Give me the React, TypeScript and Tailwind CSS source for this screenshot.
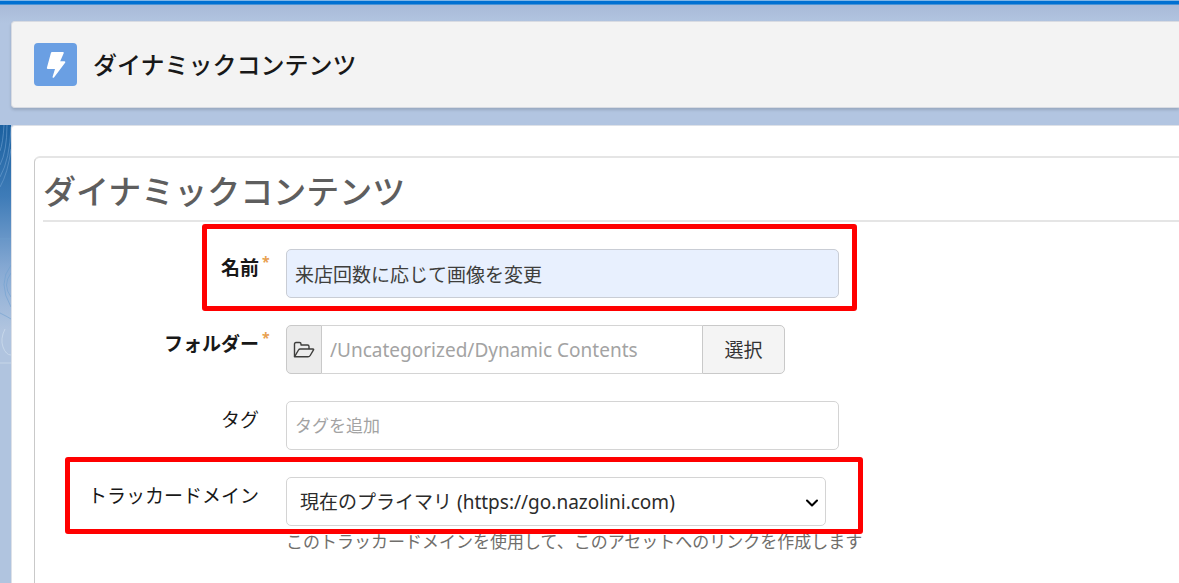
import { ChevronDown } from "lucide-react";
import type { JSX, ReactNode } from "react";

interface FieldRowProps {
  id: string;
  label: string;
  required?: boolean;
  children: ReactNode;
}

function BoltIcon(): JSX.Element {
  return (
    <svg viewBox="0 0 43 43" className="size-full" aria-hidden="true">
      <path
        d="M18 9h10.800c.8 0 1.200.6.900 1.300L26.200 18.200h4.200c.9 0 1.200.9.700 1.500L20 34.400c-.6.800-1.700.300-1.400-.700L21 26h-7.200c-.7 0-1.100-.6-.9-1.200l4-14.900c.2-.6.500-.9 1.100-.9z"
        fill="#fff"
      />
    </svg>
  );
}

function FolderIcon(): JSX.Element {
  return (
    <svg viewBox="0 0 22 18" className="h-[18px] w-[22px]" fill="none" stroke="#3e3e3c" strokeWidth="1.4" strokeLinejoin="round" aria-hidden="true">
      <path d="M1.500 15.500V3q0-1.500 1.500-1.500h3.500Q8 1.500 8 3v1h6.500Q16 4 16 5.500V8" />
      <path d="M1.500 15.800L5.500 9q.600-1 1.800-1H20q1 0 .5.900l-3.300 5.600q-.800 1.300-2.200 1.300H2q-.5 0-.5-.3z" />
    </svg>
  );
}

function FieldRow({ id, label, required = false, children }: FieldRowProps): JSX.Element {
  return (
    <div className="grid grid-cols-[227px_1fr] gap-4">
      <label htmlFor={id} className={required ? "flex justify-end pt-[5px] font-bold" : "flex justify-end pt-[5px]"}>
        {label}
        <span className="w-[11px] pl-[3px] text-sm leading-4 text-[#e8a04f]">{required ? "*" : ""}</span>
      </label>
      <div>{children}</div>
    </div>
  );
}

// 注目させたい行を囲む赤枠
function Highlight({ className }: { className: string }): JSX.Element {
  return <div aria-hidden="true" className={`pointer-events-none absolute rounded-[3px] border-5 border-[#ff0000] ${className}`} />;
}

export default function App(): JSX.Element {
  return (
    <div className="flex min-h-screen flex-col overflow-hidden bg-[#b0c4df] font-['Noto_Sans','Noto_Sans_CJK_JP',sans-serif] text-[19px] leading-7 text-[#181818]">
      <div className="h-[5px] border-t border-b border-t-[#7fb5e6] border-b-[#4a93d6] bg-[#0070d2]" />
      <div className="bg-linear-to-b from-[#a9bad8] to-[#b2c5e1] to-15% pt-4 pb-[17px] pl-[11px]">
        <header className="flex h-[87px] items-center gap-4 rounded-l border border-r-0 border-[#d8dbe2] bg-[#f3f3f3] pl-[22px] shadow-[0_2px_3px_rgba(0,0,0,0.15)]">
          <div className="size-[43px] rounded bg-[#6a9fe3]">
            <BoltIcon />
          </div>
          <h1 className="text-2xl font-medium">ダイナミックコンテンツ</h1>
        </header>
      </div>

      <div className="flex grow bg-[#b0c4df]">
        <div className="w-[11px] shrink-0">
          <svg viewBox="0 0 11 240" className="h-60 w-[11px]" aria-hidden="true">
            <defs>
              <linearGradient id="sky" x1="0" y1="0" x2="0" y2="1">
                <stop offset="0" stopColor="#1b609f" />
                <stop offset="0.3" stopColor="#3f7cb8" />
                <stop offset="0.6" stopColor="#86a9d3" />
                <stop offset="0.85" stopColor="#b0c4df" />
              </linearGradient>
            </defs>
            <rect width="11" height="240" fill="url(#sky)" />
            <g fill="none" stroke="#6fa0d0" strokeOpacity="0.6">
              <path d="M4 0Q3 18 0 26M7 0Q7 26 0 40M11 2Q10 34 0 52M11 24Q8 48 0 62" />
              <path d="M0 114H11M11 148Q2 160 11 172M11 140Q-3 158 11 182M0 188Q8 192 11 194" />
              <path d="M5 204Q0 214 3 222T11 230M0 238H11" stroke="#d5e2f0" />
            </g>
          </svg>
        </div>
        <main className="grow rounded-tl border-t border-l border-[#dde1e8] bg-white pt-[30px] pl-[22px]">
          <section className="h-full rounded-tl-md border-t-2 border-l border-t-[#e5e5e5] border-l-[#c9c9c9] pl-2">
            <h2 className="border-b-2 border-[#e5e5e5] pt-3 pb-[6px] text-[33px] leading-[44px] font-medium text-[#5e5e5e]">
              ダイナミックコンテンツ
            </h2>
            <form className="flex max-w-[840px] flex-col gap-[27px] pt-[27px]">
              <div className="relative">
                <FieldRow id="name" label="名前" required>
                  <input
                    id="name"
                    defaultValue="来店回数に応じて画像を変更"
                    className="block h-[49px] w-[553px] rounded-[5px] border border-[#c9cdd5] bg-[#e8f0fe] px-2 text-[#3e3e3c]"
                  />
                </FieldRow>
                <Highlight className="-top-[25px] left-[159px] h-[87px] w-[655px]" />
              </div>
              <FieldRow id="folder" label="フォルダー" required>
                <div className="flex h-[49px] w-[499px]">
                  <span className="flex w-9 items-center justify-center rounded-l-[5px] border border-[#c9c9c9] bg-[#ececec]">
                    <FolderIcon />
                  </span>
                  <input
                    id="folder"
                    placeholder="/Uncategorized/Dynamic Contents"
                    className="w-0 grow border-y border-[#d4d4d4] px-2 placeholder:text-[#a3a3a3]"
                  />
                  <button type="button" className="w-[83px] rounded-r-[5px] border border-[#c9c9c9] bg-[#f4f4f4] text-[#333333]">
                    選択
                  </button>
                </div>
              </FieldRow>
              <FieldRow id="tags" label="タグ">
                <input
                  id="tags"
                  placeholder="タグを追加"
                  className="block h-[49px] w-[553px] rounded-[5px] border border-[#d4d4d4] px-2 text-[17px] placeholder:text-[#a3a3a3]"
                />
              </FieldRow>
              <div className="relative">
                <FieldRow id="tracker" label="トラッカードメイン">
                  <div className="relative w-[540px]">
                    <select
                      id="tracker"
                      className="block h-[49px] w-full appearance-none rounded-[5px] border border-[#d4d4d4] bg-white px-[13px] text-[#2b2b2b]"
                    >
                      <option>現在のプライマリ (https://go.nazolini.com)</option>
                    </select>
                    <ChevronDown className="pointer-events-none absolute top-4 right-1 size-5 text-black" strokeWidth={2.5} />
                  </div>
                  <p className="mt-1 text-[17px] leading-6 text-[#706e6b]">
                    このトラッカードメインを使用して、このアセットへのリンクを作成します
                  </p>
                </FieldRow>
                <Highlight className="-top-5 left-[22px] h-[77px] w-[798px]" />
              </div>
            </form>
          </section>
        </main>
      </div>
    </div>
  );
}
